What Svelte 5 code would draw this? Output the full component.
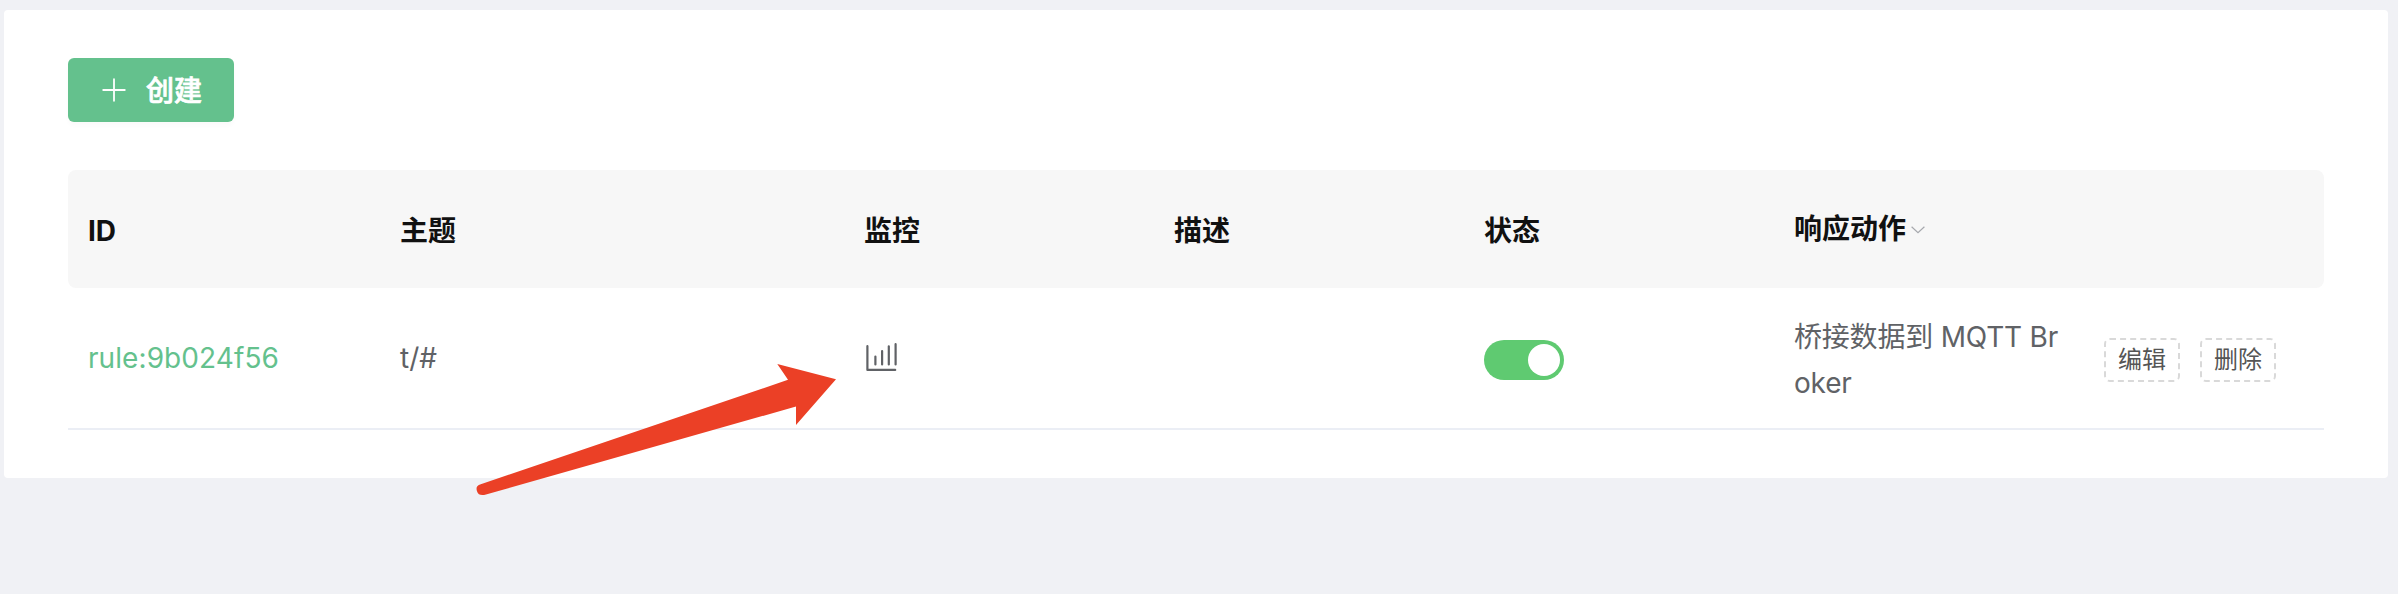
<script>
  const columns = ['ID', '主题', '监控', '描述', '状态'];
  const actions = ['编辑', '删除'];
</script>

<main>
  <section class="card">
    <button class="create">
      <svg width="24" height="24" viewBox="0 0 24 24" fill="none" stroke="#fff" stroke-width="1.8" stroke-linecap="round">
        <path d="M12 1.2v21.6M1.2 12h21.6" />
      </svg>
      <span>创建</span>
    </button>

    <div class="table">
      <div class="row head">
        {#each columns as name}
          <div class="cell title">{name}</div>
        {/each}
        <div class="cell filter">
          <span>响应动作</span>
          <svg width="14" height="8" viewBox="0 0 14 8" fill="none" stroke="#a6a8ad" stroke-width="1.2">
            <path d="M.6.8 7 6.8 13.4.8" />
          </svg>
        </div>
        <div class="cell"></div>
      </div>

      <div class="row body">
        <div class="cell link">rule:9b024f56</div>
        <div class="cell">t/#</div>
        <div class="cell">
          <svg class="chart" width="34" height="28" viewBox="0 0 34 28" fill="none" stroke="#606266" stroke-width="2.2" stroke-linecap="round" stroke-linejoin="round">
            <path d="M3.400 3.200v23.700h27.800M11.400 13.500v8M18.100 8v13.500M24.800 3.300v18.200M31.600 1.200v20.300" />
          </svg>
        </div>
        <div class="cell"></div>
        <div class="cell"><div class="switch"><i></i></div></div>
        <div class="cell wrap">桥接数据到 MQTT Broker</div>
        <div class="cell actions">
          {#each actions as action}
            <button>{action}</button>
          {/each}
        </div>
      </div>
    </div>
  </section>

  <svg class="arrow" width="362" height="134" viewBox="0 0 362 134">
    <path fill="#eb4026" d="M360 15.2 301.300 0 312 15.800 4 120.500C.5 121.800 0 124 1 127.200 2.200 130.800 5 131.800 10 130.500L320 42.500V61Z" />
  </svg>
</main>

<style>
  :global(body) {
    background: #f0f1f5;
  }
  main {
    position: relative;
    box-sizing: border-box;
    height: 594px;
    padding: 10px 10px 0 4px;
    font: 28px/46px Inter, "Noto Sans CJK SC", sans-serif;
    color: #606266;
  }
  .card {
    box-sizing: border-box;
    height: 468px;
    padding: 48px 64px;
    background: #fff;
    border-radius: 4px;
  }
  button {
    font-family: inherit;
    margin: 0;
  }
  .create {
    display: flex;
    align-items: center;
    gap: 20px;
    width: 166px;
    height: 64px;
    padding: 0 0 0 34px;
    border: 0;
    border-radius: 6px;
    background: #64c18d;
    box-shadow: 0 4px 4px rgba(0, 0, 0, 0.02);
    color: #fff;
    font-size: 28px;
    font-weight: 500;
    line-height: 40px;
    -webkit-text-stroke: 0.7px #fff;
  }
  .create span {
    padding-top: 1px;
  }
  .table {
    margin-top: 48px;
  }
  .row {
    display: grid;
    grid-template-columns: 312px 464px 310px 310px 310px 310px 240px;
    align-items: center;
    box-sizing: border-box;
  }
  .head {
    height: 118px;
    border-radius: 8px;
    background: #f7f7f7;
    color: #111;
    font-weight: 600;
  }
  .body {
    height: 142px;
    border-bottom: 2px solid #ebeef5;
  }
  .cell {
    padding: 0 20px;
  }
  .title {
    padding-top: 3px;
  }
  .title:first-child {
    font-weight: 700;
  }
  .filter {
    display: flex;
    align-items: center;
    gap: 5px;
  }
  .filter svg {
    margin-top: 1px;
  }
  .link {
    color: #64c18d;
    letter-spacing: 0.08px;
  }
  .chart {
    display: block;
    margin-top: -2px;
  }
  .wrap {
    padding-top: 3px;
    word-break: break-all;
    letter-spacing: -0.2px;
  }
  .switch {
    display: flex;
    justify-content: flex-end;
    box-sizing: border-box;
    width: 80px;
    height: 40px;
    margin-top: 4px;
    padding: 4px;
    border-radius: 20px;
    background: #5fca71;
  }
  .switch i {
    width: 32px;
    height: 32px;
    border-radius: 50%;
    background: #fff;
  }
  .actions {
    display: flex;
    gap: 20px;
    padding-top: 4px;
  }
  .actions button {
    box-sizing: border-box;
    width: 76px;
    height: 44px;
    padding: 0;
    border: 2px dashed #d9d9d9;
    border-radius: 6px;
    background: #fff;
    color: #555;
    font-size: 24px;
    line-height: 36px;
  }
  .arrow {
    position: absolute;
    left: 476px;
    top: 364px;
  }
</style>
